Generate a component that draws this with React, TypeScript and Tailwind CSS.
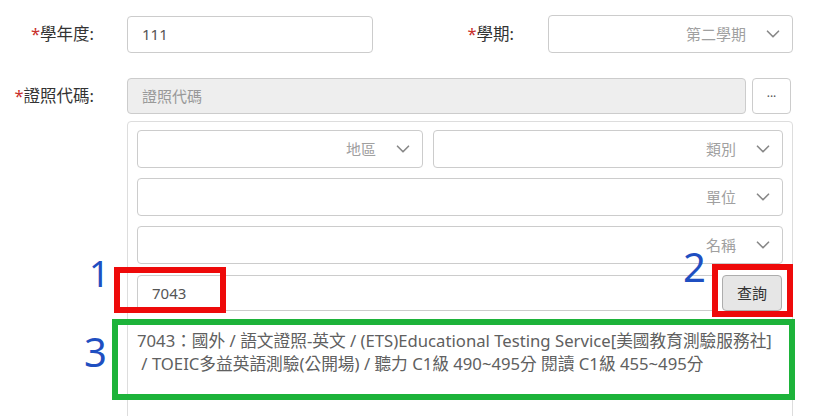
import { ChevronDown } from "lucide-react";

const font = { fontFamily: '"Noto Sans", "Noto Sans CJK TC", sans-serif' };

function Select({ label, className = "" }: { label: string; className?: string }) {
  return (
    <div
      className={`flex h-[38px] items-center justify-end rounded-[4px] border border-[#cccccc] bg-white pr-[8px] ${className}`}
    >
      <span className="text-[15px] text-[#a0a0a0]">{label}</span>
      <ChevronDown className="ml-[16px] h-[22px] w-[22px] text-[#888888]" strokeWidth={1.8} />
    </div>
  );
}

function Label({ text, className = "" }: { text: string; className?: string }) {
  return (
    <div className={`text-right text-[16.5px] text-[#333333] ${className}`}>
      <span className="text-[#c9302c]">*</span>
      {text}
    </div>
  );
}

export default function App() {
  return (
    <div className="relative h-[416px] w-[822px] overflow-hidden bg-white" style={font}>
      <div className="flex flex-col pt-[15px]">
        {/* row 1 */}
        <div className="flex items-center">
          <Label text="學年度:" className="w-[94px]" />
          <div className="ml-[33px] flex h-[37px] w-[246px] items-center rounded-[4px] border border-[#cccccc] px-[14px] text-[15px] text-[#555555]">
            111
          </div>
          <Label text="學期:" className="w-[141px]" />
          <div className="ml-[34px] w-[245px]">
            <Select label="第二學期" className="h-[37px]" />
          </div>
        </div>

        {/* row 2 */}
        <div className="mt-[25px] flex items-center">
          <Label text="證照代碼:" className="w-[94px]" />
          <div className="ml-[33px] flex h-[36px] w-[619px] items-center rounded-[4px] border border-[#cccccc] bg-[#eeeeee] px-[14px] text-[15px] text-[#999999]">
            證照代碼
          </div>
          <button className="ml-[6px] flex h-[36px] w-[39px] items-center justify-center rounded-[4px] border border-[#cccccc] bg-white pb-[6px] text-[12px] text-[#555555]">
            ...
          </button>
        </div>

        {/* panel */}
        <div className="ml-[127px] mt-[7px] h-[320px] w-[666px] rounded-t-[4px] border border-[#dddddd] px-[9px] pt-[8px]">
          <div className="flex gap-[10px]">
            <Select label="地區" className="w-[286px]" />
            <Select label="類別" className="flex-1" />
          </div>
          <Select label="單位" className="mt-[10px] h-[37px]" />
          <Select label="名稱" className="mt-[10px] h-[37px]" />
          <div className="mt-[11px] flex items-center">
            <div className="flex h-[36px] w-[580px] items-center rounded-[4px] border border-[#cccccc] px-[14px] text-[15px] text-[#555555]">
              7043
            </div>
            <button className="ml-[5px] flex h-[36px] w-[60px] items-center justify-center rounded-[4px] border border-[#adadad] bg-[#e6e6e6] text-[15px] text-[#333333]">
              查詢
            </button>
          </div>
          <div className="mt-[18px] text-[16.7px] leading-[23px] text-[#606060]">
            7043：國外 / 語文證照-英文 / (ETS)Educational Testing Service[美國教育測驗服務社]
            <br />
            &nbsp;/ TOEIC多益英語測驗(公開場) / 聽力 C1級 490~495分 閱讀 C1級 455~495分
          </div>
        </div>
      </div>

      {/* annotations */}
      <div className="absolute left-[114px] top-[267px] h-[46px] w-[112px] border-[6px] border-[#ee0a0a]" />
      <div className="absolute left-[712px] top-[264px] h-[53px] w-[81px] border-[6px] border-[#ee0a0a]" />
      <div className="absolute left-[112px] top-[319px] h-[81px] w-[683px] border-[6px] border-[#1db33a]" />
      <div className="absolute left-[89px] top-[252px] text-[36px] leading-[44px] text-[#1f4fc1]">1</div>
      <div className="absolute left-[683px] top-[243px] text-[40px] leading-[48px] text-[#1f4fc1]">2</div>
      <div className="absolute left-[84px] top-[328px] text-[40px] leading-[48px] text-[#1f4fc1]">3</div>
    </div>
  );
}
